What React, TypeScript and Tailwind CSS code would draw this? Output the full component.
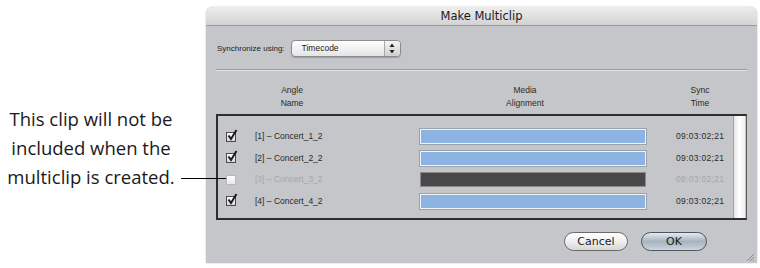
import React from 'react'

type Row = { id: number; name: string; time: string; on: boolean }

const rows: Row[] = [
  { id: 1, name: '[1] – Concert_1_2', time: '09:03:02;21', on: true },
  { id: 2, name: '[2] – Concert_2_2', time: '09:03:02;21', on: true },
  { id: 3, name: '[3] – Concert_3_2', time: '09:03:02;21', on: false },
  { id: 4, name: '[4] – Concert_4_2', time: '09:03:02;21', on: true },
]

// Casilla estilo Aqua con la marca que sobresale por arriba
function Check({ on }: { on: boolean }) {
  return (
    <div className="relative w-[10px] h-[10px]">
      <div
        className={
          on
            ? 'w-[10px] h-[10px] border border-[#4a4a4a] bg-gradient-to-b from-white to-[#d8d8d8]'
            : 'w-[10px] h-[10px] border border-[#b8b8b8] bg-gradient-to-b from-white to-[#e8e8e8]'
        }
      />
      {on && (
        <svg className="absolute -top-[3px] left-[1px]" width="11" height="12" viewBox="0 0 11 12">
          <path d="M1.5 6.5 L4 10 L9.5 1" fill="none" stroke="#1a1a1a" strokeWidth="2" />
        </svg>
      )}
    </div>
  )
}

function PopUp() {
  return (
    <div className="flex h-[17px] w-[110px] rounded-[4px] border border-[#8c8c8c] bg-gradient-to-b from-white to-[#e4e4e4] shadow-[0_1px_1px_rgba(0,0,0,0.2)]">
      <span className="flex-1 pl-[10px] text-[8.5px] leading-[15px] text-[#1c1c1c]">Timecode</span>
      <div className="w-[16px] border-l border-[#a8a8a8] flex items-center justify-center rounded-r-[4px] bg-gradient-to-b from-[#f4f4f4] to-[#d0d0d0]">
        <svg width="6" height="11" viewBox="0 0 6 11">
          <path d="M3 0.5 L5.5 4 L0.5 4 Z" fill="#222" />
          <path d="M3 10.5 L5.5 7 L0.5 7 Z" fill="#222" />
        </svg>
      </div>
    </div>
  )
}

export default function App() {
  return (
    <div
      className="relative flex w-[760px] h-[268px] bg-white overflow-hidden"
      style={{ fontFamily: '"Liberation Sans", Arial, sans-serif' }}
    >
      {/* Texto explicativo a la izquierda */}
      <div
        className="w-[206px] pt-[104px] pr-[24px] text-center text-[18.5px] leading-[29px] text-[#1a1a1a]"
        style={{ fontFamily: '"Open Sans", "Liberation Sans", sans-serif' }}
      >
        <p>This clip will not be</p>
        <p>included when the</p>
        <p>multiclip is created.</p>
      </div>

      {/* Línea de llamada hacia la casilla 3 */}
      <div className="absolute left-[181px] top-[178px] w-[45px] h-[1px] bg-black z-10" />

      {/* Ventana */}
      <div className="mt-[7px] w-[551px] h-[256px] flex flex-col rounded-t-[7px] bg-[#c4c6c9] shadow-[0_0_2px_rgba(0,0,0,0.25)]">
        <div
          className="h-[19px] rounded-t-[7px] border-b border-[#9a9a9a] bg-gradient-to-b from-[#ededed] to-[#d3d3d3] text-center text-[11.5px] leading-[18px] text-[#1a1a1a]"
          style={{ fontFamily: '"DejaVu Sans", sans-serif' }}
        >
          Make Multiclip
        </div>

        <div className="flex flex-col px-[10px]">
          <div className="mt-[14px] flex items-center gap-[6px] pl-[1px]">
            <span className="text-[8px] text-[#1c1c1c]">Synchronize using:</span>
            <PopUp />
          </div>

          <div className="mt-[12px] h-[2px] border-t border-[#9c9ea1] border-b border-b-[#e2e3e5]" />

          {/* Encabezados */}
          <div className="mt-[13px] flex text-[8.5px] leading-[13px] text-[#2a2a2a] text-center">
            <div className="ml-[50px] w-[52px]">Angle<br />Name</div>
            <div className="ml-[161px] w-[92px]">Media<br />Alignment</div>
            <div className="ml-[109px] w-[40px]">Sync<br />Time</div>
          </div>

          {/* Tabla */}
          <div className="mt-[4px] h-[106px] flex border-t-2 border-l-2 border-b-2 border-[#2e2e2e] border-r border-r-[#5a5a5a]">
            <div className="flex-1 flex flex-col pt-[10px]">
              {rows.map((r) => (
                <div key={r.id} className="h-[21.5px] flex items-center">
                  <div className="ml-[8px]">
                    <Check on={r.on} />
                  </div>
                  <span
                    className={
                      'ml-[19px] w-[165px] text-[8.5px] ' + (r.on ? 'text-[#2a2a2a]' : 'text-[#a4a6a9]')
                    }
                  >
                    {r.name}
                  </span>
                  <div
                    className={
                      r.on
                        ? 'w-[226px] h-[15px] border border-[#f2f4f8] bg-[#8db3e2] shadow-[0_0_0_1px_#9aa2ac]'
                        : 'w-[226px] h-[15px] border border-[#8a8a8a] bg-[#484848]'
                    }
                  />
                  <span
                    className={
                      'ml-[30px] text-[8.5px] tracking-[0.3px] ' + (r.on ? 'text-[#2a2a2a]' : 'text-[#a4a6a9]')
                    }
                  >
                    {r.time}
                  </span>
                </div>
              ))}
            </div>
            <div className="w-[12px] mr-[1px] border-l border-[#a0a0a0] bg-gradient-to-r from-[#e6e6e6] via-white to-[#f0f0f0]" />
          </div>

          {/* Botones */}
          <div className="mt-[12px] flex justify-end gap-[13px] pr-[40px]">
            <button
              className="w-[64px] h-[19px] rounded-full border border-[#6a6a6a] bg-gradient-to-b from-white via-[#f0f0f0] to-[#d6d6d6] text-[11px] leading-[17px] text-[#1a1a1a]"
              style={{ fontFamily: '"DejaVu Sans", sans-serif' }}
            >
              Cancel
            </button>
            <button
              className="w-[66px] h-[19px] rounded-full border border-[#4c5660] bg-gradient-to-b from-[#e4e9ee] via-[#a7b3bf] to-[#cdd5dd] text-[11px] leading-[17px] text-[#1a1a1a]"
              style={{ fontFamily: '"DejaVu Sans", sans-serif' }}
            >
              OK
            </button>
          </div>
        </div>

        {/* Agarre de redimensionado */}
        <div className="mt-auto self-end mr-[2px] mb-[1px]">
          <svg width="11" height="11" viewBox="0 0 11 11">
            <path d="M10 3 L3 10 M10 6 L6 10 M10 9 L9 10" stroke="#8a8a8a" strokeWidth="1" />
          </svg>
        </div>
      </div>
    </div>
  )
}
